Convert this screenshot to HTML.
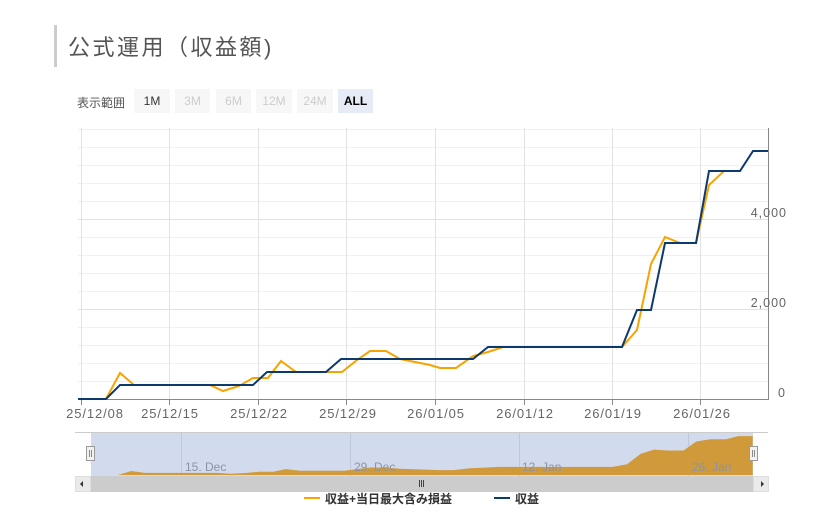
<!DOCTYPE html>
<html><head><meta charset="utf-8"><style>
body{margin:0;width:821px;height:530px;background:#fff;font-family:"Liberation Sans","Noto Sans CJK JP",sans-serif;position:relative;overflow:hidden}
.bar{position:absolute;left:54px;top:25px;width:3px;height:42px;background:#ccc}
.title{position:absolute;left:68px;top:30px;font-size:22px;color:#555;letter-spacing:2.5px}
.lbl{position:absolute;left:77px;top:94px;font-size:12px;color:#555}
.btn{position:absolute;top:89px;height:24px;line-height:24px;font-size:12px;text-align:center;background:#f7f7f7;color:#ccc}
</style></head><body>
<div class="bar"></div>
<div class="title">公式運用（収益額)</div>
<div class="lbl">表示範囲</div>
<div class="btn" style="left:134px;width:36px;color:#333">1M</div>
<div class="btn" style="left:175px;width:35px">3M</div>
<div class="btn" style="left:216px;width:35px">6M</div>
<div class="btn" style="left:256px;width:36px">12M</div>
<div class="btn" style="left:297px;width:36px">24M</div>
<div class="btn" style="left:338px;width:35px;background:#e6ebf5;color:#000;font-weight:bold">ALL</div>
<svg width="821" height="530" style="position:absolute;left:0;top:0" font-family="Liberation Sans, sans-serif">
<g stroke="#f0f0f0" stroke-width="1">
<line x1="78" x2="768" y1="129.5" y2="129.5"/><line x1="78" x2="768" y1="147.5" y2="147.5"/><line x1="78" x2="768" y1="165.5" y2="165.5"/><line x1="78" x2="768" y1="183.5" y2="183.5"/><line x1="78" x2="768" y1="201.5" y2="201.5"/>
<line x1="78" x2="768" y1="237.5" y2="237.5"/><line x1="78" x2="768" y1="255.5" y2="255.5"/><line x1="78" x2="768" y1="273.5" y2="273.5"/><line x1="78" x2="768" y1="291.5" y2="291.5"/>
<line x1="78" x2="768" y1="327.5" y2="327.5"/><line x1="78" x2="768" y1="345.5" y2="345.5"/><line x1="78" x2="768" y1="363.5" y2="363.5"/><line x1="78" x2="768" y1="381.5" y2="381.5"/>
</g>
<g stroke="#e2e2e2"><line x1="78" x2="768" y1="219.5" y2="219.5"/><line x1="78" x2="768" y1="309.5" y2="309.5"/>
<line x1="81.5" x2="81.5" y1="128" y2="399"/><line x1="169.5" x2="169.5" y1="128" y2="399"/><line x1="258.5" x2="258.5" y1="128" y2="399"/><line x1="346.5" x2="346.5" y1="128" y2="399"/><line x1="435.5" x2="435.5" y1="128" y2="399"/><line x1="524.5" x2="524.5" y1="128" y2="399"/><line x1="612.5" x2="612.5" y1="128" y2="399"/><line x1="700.5" x2="700.5" y1="128" y2="399"/></g>
<line x1="768.5" x2="768.5" y1="128" y2="399" stroke="#888"/>
<line x1="78" x2="769" y1="399.5" y2="399.5" stroke="#888"/>
<g stroke="#888"><line x1="81.5" x2="81.5" y1="399" y2="405"/><line x1="169.5" x2="169.5" y1="399" y2="405"/><line x1="258.5" x2="258.5" y1="399" y2="405"/><line x1="346.5" x2="346.5" y1="399" y2="405"/><line x1="435.5" x2="435.5" y1="399" y2="405"/><line x1="524.5" x2="524.5" y1="399" y2="405"/><line x1="612.5" x2="612.5" y1="399" y2="405"/><line x1="700.5" x2="700.5" y1="399" y2="405"/></g>
<g font-size="13" fill="#666" text-anchor="middle" letter-spacing="0.9"><text x="95" y="418">25/12/08</text><text x="170" y="418">25/12/15</text><text x="259" y="418">25/12/22</text><text x="348" y="418">25/12/29</text><text x="436" y="418">26/01/05</text><text x="525" y="418">26/01/12</text><text x="613" y="418">26/01/19</text><text x="702" y="418">26/01/26</text></g>
<g font-size="12.5" fill="#666" text-anchor="end" letter-spacing="1"><text x="787" y="217">4,000</text><text x="787" y="307">2,000</text><text x="786" y="397">0</text></g>
<polyline fill="none" stroke="#f7a300" stroke-width="2" points="78,399 106,399 120,373 134,385 210,385 223,391 239,386 253,378 268,378 281,361 296,372 342,372 357,360 370,351 386,351 400,359 430,365 440,368 456,368 473,356 488,352 503,347 622,347 637,330 651,264 665,237 680,243 696,243 709,185 724,171 740,171"/>
<polyline fill="none" stroke="#0d3a6e" stroke-width="2" points="78,399 106,399 120,385 253,385 267,372 326,372 341,359 473,359 488,347 622,347 637,310 651,310 665,243 696,243 709,171 740,171 753,151 768,151"/>
<line x1="75" x2="768" y1="432.5" y2="432.5" stroke="#ccc"/>
<rect x="91" y="433" width="662" height="43" fill="#d2dbee"/>
<g stroke="#c0c8dc"><line x1="181.5" x2="181.5" y1="433" y2="476"/><line x1="350.5" x2="350.5" y1="433" y2="476"/><line x1="519.5" x2="519.5" y1="433" y2="476"/><line x1="688.5" x2="688.5" y1="433" y2="476"/></g>
<g transform="matrix(0.959,0,0,0.157,16.2,412.4)"><polygon fill="#d09a3a" points="78,399 106,399 120,373 134,385 210,385 223,391 239,386 253,378 268,378 281,361 296,372 342,372 357,360 370,351 386,351 400,359 430,365 440,368 456,368 473,356 488,352 503,347 622,347 637,330 651,264 665,237 680,243 696,243 709,185 724,171 740,171 753,151 768,151 768,399"/></g>
<g font-size="12" fill="#8a93a8"><text x="185" y="471">15. Dec</text><text x="354" y="471">29. Dec</text><text x="522" y="471">12. Jan</text><text x="692" y="471">26. Jan</text></g>
<rect x="86.5" y="446.5" width="8" height="14" fill="#f2f2f2" stroke="#999"/><line x1="89.5" x2="89.5" y1="450" y2="457" stroke="#888"/><line x1="91.5" x2="91.5" y1="450" y2="457" stroke="#888"/>
<rect x="749.5" y="446.5" width="8" height="14" fill="#f2f2f2" stroke="#999"/><line x1="752.5" x2="752.5" y1="450" y2="457" stroke="#888"/><line x1="754.5" x2="754.5" y1="450" y2="457" stroke="#888"/>
<rect x="75" y="476" width="693" height="16" fill="#f2f2f2"/>
<rect x="91" y="476" width="662" height="16" fill="#cccccc"/>
<rect x="75.5" y="476.5" width="15" height="15" fill="#eaeaea" stroke="#ddd"/><rect x="753.5" y="476.5" width="15" height="15" fill="#eaeaea" stroke="#ddd"/>
<polygon points="80,484 83,481 83,487" fill="#333"/><polygon points="764,484 761,481 761,487" fill="#333"/>
<g stroke="#444"><line x1="419.5" x2="419.5" y1="480" y2="487"/><line x1="421.5" x2="421.5" y1="480" y2="487"/><line x1="423.5" x2="423.5" y1="480" y2="487"/></g>
<line x1="304" x2="320" y1="498" y2="498" stroke="#f7a300" stroke-width="2"/>
<text x="325" y="503" font-size="12" font-weight="bold" fill="#333" font-family="Liberation Sans, Noto Sans CJK JP, sans-serif">収益+当日最大含み損益</text>
<line x1="494" x2="510" y1="498" y2="498" stroke="#0d3a6e" stroke-width="2"/>
<text x="515" y="503" font-size="12" font-weight="bold" fill="#333" font-family="Liberation Sans, Noto Sans CJK JP, sans-serif">収益</text>
</svg>
</body></html>
